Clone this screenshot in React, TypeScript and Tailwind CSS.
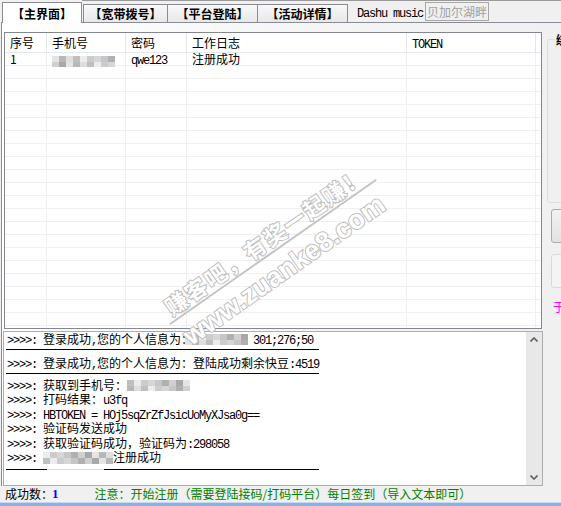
import React from 'react';

const mono = "font-['Liberation_Mono',monospace] text-[12px] tracking-[-1.2px] whitespace-pre";

// ascii runs get the half-width mono face, the rest stays CJK
function Mix({ text }: { text: string }) {
  const parts = text.split(/([\x00-\x7F]+)/).filter(Boolean);
  return (
    <>
      {parts.map((p, i) =>
        /^[\x00-\x7F]+$/.test(p) ? (
          <span key={i} className={mono}>{p}</span>
        ) : (
          <span key={i}>{p}</span>
        )
      )}
    </>
  );
}

const shades = ['#d6d6d6', '#bfbfbf', '#e4e4e4', '#b0b0b0', '#cccccc', '#dedede', '#a8a8a8', '#c6c6c6', '#ececec', '#b8b8b8', '#d0d0d0'];

function Mosaic({ count, seed, className }: { count: number; seed: number; className: string }) {
  return (
    <span className={`inline-flex flex-wrap overflow-hidden align-middle blur-[0.5px] ${className}`}>
      {Array.from({ length: count }).map((_, i) => (
        <span key={i} className="block w-[7px] h-[6px]" style={{ background: shades[(i * 7 + seed) % shades.length] }} />
      ))}
    </span>
  );
}

const cols = ['w-[42px]', 'w-[79px]', 'w-[61px]', 'w-[220px]', 'w-[129px]'];

function Row({ cells }: { cells: React.ReactNode[] }) {
  return (
    <div className="flex h-[13px] border-b border-[#f0f0f0] leading-[12px]">
      {cols.map((c, i) => (
        <div key={i} className={`${c} shrink-0 border-r border-[#f0f0f0] pl-[5px] whitespace-nowrap`}>
          {cells[i]}
        </div>
      ))}
      <div className="flex-1" />
    </div>
  );
}

function Tab({ label, active, w }: { label: string; active?: boolean; w: string }) {
  if (active) {
    return (
      <div className={`${w} h-[21px] mb-[-1px] relative z-10 flex items-center justify-center pt-[1px] border-x border-t border-[#898c95] bg-white font-bold`}>
        {label}
      </div>
    );
  }
  return (
    <div className={`${w} h-[18px] flex items-center justify-center pt-[1px] border-x border-t border-[#898c95] bg-linear-to-b from-[#f8f8f8] to-[#e8e8e8] font-bold`}>
      {label}
    </div>
  );
}

function Chevron({ up }: { up?: boolean }) {
  return (
    <svg width="8" height="5" viewBox="0 0 8 5" className={up ? '' : 'rotate-180'}>
      <path d="M0.5 4.5 L4 1 L7.5 4.5" fill="none" stroke="#606060" strokeWidth="1.6" />
    </svg>
  );
}

const sep = 'h-[1px] w-[313px] ml-[-1px] bg-black';

export default function App() {
  const rows: React.ReactNode[][] = [
    ['1', <Mosaic key="m" count={20} seed={2} className="w-[65px] h-[11px] mt-[1px]" />, <Mix key="p" text="qwe123" />, '注册成功', '', ''],
  ];
  for (let i = 0; i < 21; i++) rows.push([]);

  return (
    <div className="relative w-[561px] h-[506px] overflow-hidden bg-[#f0f0f0] text-[12px] text-black font-['Noto_Sans_CJK_SC',sans-serif] flex flex-col">
      {/* tab strip */}
      <div className="h-[22px] flex flex-col shrink-0">
        <div className="h-[1px] ml-[82px] bg-[#9a9a9a]" />
        <div className="h-[21px] flex items-end pl-[2px]">
          <Tab label="【主界面】" active w="w-[80px]" />
          <div className="w-[1px]" />
          <Tab label="【宽带拨号】" w="w-[85px]" />
          <Tab label="【平台登陆】" w="w-[91px] -ml-[1px]" />
          <Tab label="【活动详情】" w="w-[91px] -ml-[1px]" />
          <div className="h-[18px] w-[77px] flex items-center pl-[9px] pt-[1px]">
            <Mix text="Dashu music" />
          </div>
          <div className="h-[19px] mb-[1px] w-[64px] shrink-0 overflow-hidden whitespace-nowrap border border-[#a8a8a8] text-[#a0a0a0] flex items-center justify-center leading-[14px] text-[12px]">
            贝加尔湖畔
          </div>
        </div>
      </div>

      {/* tab pane */}
      <div className="ml-[1px] h-[464px] border-l border-t border-[#898c95] bg-linear-to-r from-white via-[#f6f6f6] to-[#f0f0f0] flex shrink-0">
        <div className="w-[541px] shrink-0 pl-[1px] pt-[9px] flex flex-col">
          {/* list view */}
          <div className="ml-[1px] w-[538px] h-[297px] border border-[#828790] bg-white overflow-hidden">
            <div className="flex h-[20px] border-b border-[#e3e8f0] leading-[19px]">
              {['序号', '手机号', '密码', '工作日志', <Mix key="t" text="TOKEN" />].map((h, i) => (
                <div key={i} className={`${cols[i]} shrink-0 border-r border-[#e5e5e5] pl-[5px] whitespace-nowrap`}>
                  {h}
                </div>
              ))}
              <div className="flex-1" />
            </div>
            {rows.map((r, i) => (
              <Row key={i} cells={r} />
            ))}
          </div>

          {/* log box */}
          <div className="mt-[2px] h-[155px] w-[540px] border border-[#abadb3] bg-white flex">
            <div className="flex-1 pl-[3px] whitespace-nowrap overflow-hidden">
              <div className="h-[13px] leading-[13px]">
                <Mix text=">>>>: 登录成功,您的个人信息为：" />
                <Mosaic count={20} seed={5} className="w-[68px] h-[11px] -ml-[8px] -mt-[2px]" />
                <Mix text="301;276;50" />
              </div>
              <div className={`${sep} mt-[4px]`} />
              <div className="h-[13px] leading-[13px] mt-[6px]">
                <Mix text=">>>>: 登录成功,您的个人信息为：登陆成功剩余快豆:4519" />
              </div>
              <div className={`${sep} mt-[4px]`} />
              <div className="mt-[5px] leading-[12.4px]">
                <div>
                  <Mix text=">>>>: 获取到手机号：" />
                  <Mosaic count={20} seed={1} className="w-[67px] h-[11px] -mt-[2px]" />
                </div>
                <div><Mix text=">>>>: 打码结果：u3fq" /></div>
                <div><Mix text=">>>>: HBTOKEN = HOj5sqZrZfJsicUoMyXJsa0g==" /></div>
                <div><Mix text=">>>>: 验证码发送成功" /></div>
                <div><Mix text=">>>>: 获取验证码成功，验证码为:298058" /></div>
                <div>
                  <Mix text=">>>>: " />
                  <Mosaic count={20} seed={8} className="w-[70px] h-[12px] -mt-[2px]" />
                  注册成功
                </div>
              </div>
              <div className="flex h-[1px] w-[313px] ml-[-1px] mt-[4px]">
                <div className="w-[41px] bg-black" />
                <div className="w-[57px] bg-[#dcdcdc]" />
                <div className="flex-1 bg-black" />
              </div>
            </div>
            <div className="w-[16px] shrink-0 bg-[#e8e8e8] flex flex-col items-center justify-between py-[5px]">
              <Chevron up />
              <Chevron />
            </div>
          </div>
        </div>

        {/* right column, mostly cut off */}
        <div className="w-[14px] shrink-0 ml-[4px] flex flex-col">
          <fieldset className="mt-[10px] w-[100px] h-[170px] border border-[#d5dfe5] rounded-[3px] pl-[7px]">
            <legend className="font-bold leading-[13px] px-[1px]">绑定</legend>
          </fieldset>
          <div className="mt-[6px] ml-[4px] w-[100px] h-[34px] shrink-0 border border-[#acacac] rounded-[3px] bg-linear-to-b from-[#f2f2f2] to-[#e2e2e2]" />
          <div className="mt-[11px] ml-[4px] w-[100px] h-[34px] shrink-0 border border-[#d9d9d9] rounded-[3px] bg-[#f4f4f4]" />
          <div className="mt-[13px] ml-[6px] leading-[12px] text-[#ff00ff] whitespace-nowrap">于是</div>
        </div>
      </div>

      {/* status bar */}
      <div className="h-[16px] flex items-center pl-[5px] whitespace-nowrap shrink-0">
        <span>成功数：</span>
        <span className="font-bold text-[#0000ff] font-['Liberation_Serif',serif] text-[13px] -ml-[1px]">1</span>
        <span className="ml-[36px] text-[#008000]">注意：开始注册（需要登陆接码/打码平台）每日签到（导入文本即可）</span>
      </div>
      <div className="flex-1 border-t border-[#c9daf0] bg-[#86b2e8]" />

      {/* site watermark over the screenshot */}
      <div className="pointer-events-none absolute left-[265px] top-[240px] -translate-x-1/2 -translate-y-1/2 -rotate-[35deg] whitespace-nowrap text-[22px] font-bold tracking-[2px] text-white [-webkit-text-stroke:2px_#bdbdbd] [paint-order:stroke_fill]">
        赚客吧，有奖一起赚！
      </div>
      <div className="pointer-events-none absolute left-[273px] top-[252px] -translate-x-1/2 -translate-y-1/2 -rotate-[35deg] w-[252px] h-[2px] bg-[#c4c4c4]" />
      <div className="pointer-events-none absolute left-[284px] top-[270px] -translate-x-1/2 -translate-y-1/2 -rotate-[35deg] whitespace-nowrap text-[27px] leading-[30px] font-bold font-['Liberation_Sans',sans-serif] text-white [-webkit-text-stroke:2px_#bdbdbd] [paint-order:stroke_fill]">
        www.zuanke8.com
      </div>
    </div>
  );
}
